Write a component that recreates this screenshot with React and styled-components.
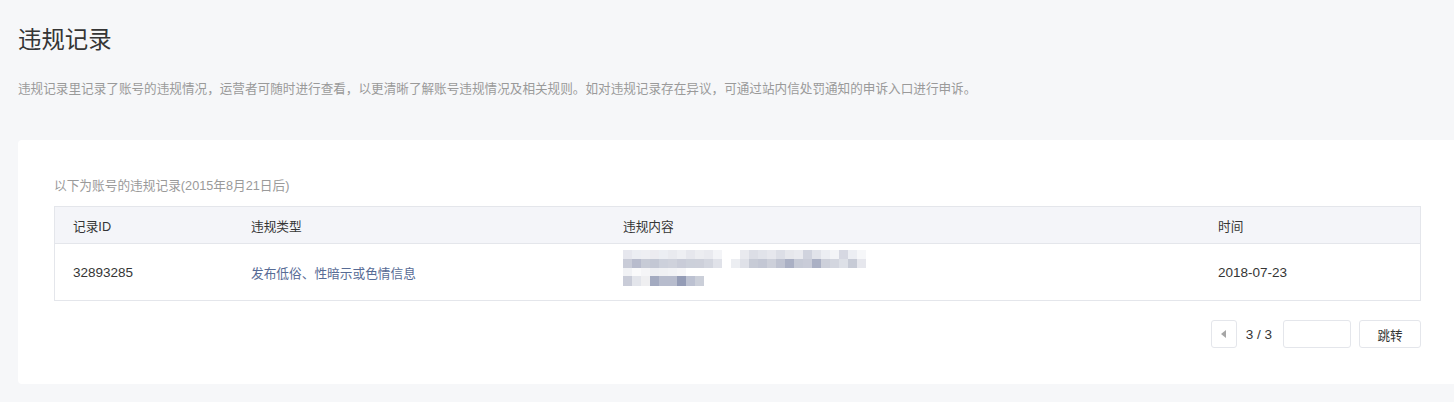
import React from "react";
import styled, { createGlobalStyle } from "styled-components";

const GlobalStyle = createGlobalStyle`
  html, body {
    margin: 0;
    padding: 0;
    background: #f6f7f9;
    overflow: hidden;
  }
  body {
    font-family: "Liberation Sans", "Noto Sans CJK SC", sans-serif;
    color: #353535;
  }
`;

const Page = styled.div`
  padding: 24px 0 0 18px;
  min-height: 402px;
  box-sizing: border-box;
`;

const Title = styled.h1`
  margin: 0;
  font-size: 23.4px;
  line-height: 32px;
  font-weight: 400;
  color: #353535;
`;

const Desc = styled.p`
  margin: 23px 0 0;
  font-size: 12.62px;
  line-height: 20px;
  color: #9a9a9a;
`;

const Card = styled.section`
  margin-top: 41px;
  background: #fff;
  border-radius: 4px 0 0 4px;
  padding: 36px 33px 36px 36px;
`;

const SubTitle = styled.div`
  font-size: 12.7px;
  line-height: 20px;
  color: #9a9a9a;
`;

const Table = styled.div`
  margin-top: 10px;
  border: 1px solid #e4e6eb;
`;

const Row = styled.div`
  display: grid;
  grid-template-columns: 178px 372px 595px 1fr;
  height: ${(p) => (p.$head ? "36px" : "56px")};
  background: ${(p) => (p.$head ? "#f4f5f9" : "#fff")};
  border-bottom: ${(p) => (p.$head ? "1px solid #e4e6eb" : "none")};
`;

const Cell = styled.div`
  display: flex;
  align-items: ${(p) => (p.$top ? "flex-start" : "center")};
  padding: ${(p) => (p.$top ? "6px 0 0 18px" : "0 0 0 18px")};
  font-size: ${(p) => (p.$num ? "13.5px" : "12.7px")};
  color: ${(p) => (p.$link ? "#576b95" : "#353535")};
`;

const Mosaic = styled.div`
  display: flex;
  flex-direction: column;
`;

const MosaicRow = styled.div`
  display: flex;
  height: ${(p) => p.$h}px;
`;

const Pixel = styled.span`
  width: 9px;
  height: 100%;
  flex: none;
`;

const Pager = styled.div`
  display: flex;
  justify-content: flex-end;
  align-items: center;
  margin-top: 19px;
  height: 28px;
`;

const PrevButton = styled.button`
  width: 26px;
  height: 28px;
  box-sizing: border-box;
  border: 1px solid #e4e6eb;
  border-radius: 3px;
  background: #fff;
  padding: 0;
  display: flex;
  align-items: center;
  justify-content: center;
`;

const PageText = styled.span`
  margin: 0 11px 0 9px;
  font-size: 13.5px;
  color: #353535;
`;

const JumpInput = styled.input`
  width: 68px;
  height: 28px;
  box-sizing: border-box;
  border: 1px solid #e4e6eb;
  border-radius: 3px;
  background: #fff;
  outline: none;
`;

const JumpButton = styled.button`
  margin-left: 8px;
  width: 62px;
  height: 28px;
  box-sizing: border-box;
  border: 1px solid #e4e6eb;
  border-radius: 3px;
  background: #fff;
  font-family: "Liberation Sans", "Noto Sans CJK SC", sans-serif;
  font-size: 12.6px;
  color: #353535;
  padding: 0;
`;

const _ = null;
const mosaicRows = [
  {
    h: 9,
    cells: ["#e6e7ee", "#eceef3", "#eeeff3", "#ecebf0", "#eceef3", "#e9eaef", "#eeeff3", "#e6e7ed", "#ecedf1", "#e9eaef", "#f3f4f7", _, _, "#e9eaef", "#dcdee6", "#e1e3ea", "#e6e7ed", "#dcdee6", "#e6e7ec", "#e9eaef", "#d0d3de", "#e1e3ea", "#eceef3", "#f3f4f7", "#d6d8e2", "#eceef3", "#f6f7f9"],
  },
  {
    h: 9,
    cells: ["#c9ccd8", "#b8bccd", "#c7cbd6", "#c3c7d4", "#ccd0db", "#cfd2dc", "#c9ccd8", "#ccd0da", "#cdd0da", "#d3d6df", "#e0e2e9", _, "#eceef2", "#dfe1e8", "#c7cbd6", "#c3c7d4", "#cdd0da", "#bfc3d1", "#aab0c4", "#c6cad6", "#c9ccd8", "#aab0c4", "#cdd0da", "#d3d6df", "#dde0e7", "#c7cbd6", "#e6e7ed"],
  },
  {
    h: 8,
    cells: ["#f1f2f5", "#fafafb", "#f5f5f7", "#eeeff3", "#f0f1f4", "#f2f3f6", "#f6f6f8"],
  },
  {
    h: 10,
    cells: ["#c9ccd8", "#e3e5eb", "#efeff1", "#a3aac0", "#b7bccd", "#b7bccd", "#949cb6", "#bcc1d1", "#cbcfd9"],
  },
];

const records = [
  {
    id: "32893285",
    type: "发布低俗、性暗示或色情信息",
    time: "2018-07-23",
  },
];

const ArrowLeft = () => (
  <svg width="5" height="8" viewBox="0 0 5 8">
    <path d="M5 0 L0 4 L5 8 Z" fill="#a6a6a6" />
  </svg>
);

const BlurredContent = () => (
  <Mosaic>
    {mosaicRows.map((row, i) => (
      <MosaicRow key={i} $h={row.h}>
        {row.cells.map((c, j) => (
          <Pixel key={j} style={{ background: c || "transparent" }} />
        ))}
      </MosaicRow>
    ))}
  </Mosaic>
);

const App = () => (
  <>
    <GlobalStyle />
    <Page>
      <Title>违规记录</Title>
      <Desc>
        违规记录里记录了账号的违规情况，运营者可随时进行查看，以更清晰了解账号违规情况及相关规则。如对违规记录存在异议，可通过站内信处罚通知的申诉入口进行申诉。
      </Desc>
      <Card>
        <SubTitle>以下为账号的违规记录(2015年8月21日后)</SubTitle>
        <Table>
          <Row $head>
            <Cell>记录ID</Cell>
            <Cell>违规类型</Cell>
            <Cell>违规内容</Cell>
            <Cell>时间</Cell>
          </Row>
          {records.map((r) => (
            <Row key={r.id}>
              <Cell $num>{r.id}</Cell>
              <Cell $link>{r.type}</Cell>
              <Cell $top>
                <BlurredContent />
              </Cell>
              <Cell $num>{r.time}</Cell>
            </Row>
          ))}
        </Table>
        <Pager>
          <PrevButton>
            <ArrowLeft />
          </PrevButton>
          <PageText>3 / 3</PageText>
          <JumpInput />
          <JumpButton>跳转</JumpButton>
        </Pager>
      </Card>
    </Page>
  </>
);

export default App;
